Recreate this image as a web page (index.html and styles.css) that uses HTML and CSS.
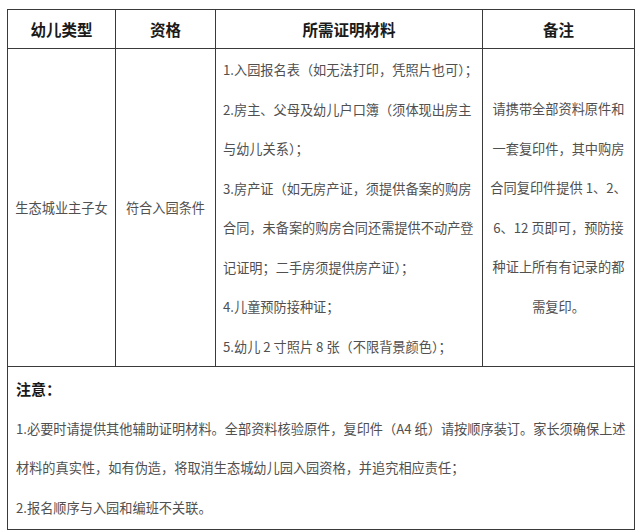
FILE: index.html
```html
<!DOCTYPE html>
<html lang="zh">
<head>
<meta charset="utf-8">
<link rel="stylesheet" href="styles.css">
</head>
<body>
<div class="sheet">
  <table class="grid">
    <colgroup>
      <col class="c1"><col class="c2"><col class="c3"><col class="c4">
    </colgroup>
    <thead>
      <tr>
        <th>幼儿类型</th>
        <th>资格</th>
        <th>所需证明材料</th>
        <th>备注</th>
      </tr>
    </thead>
    <tbody>
      <tr class="body-row">
        <td class="center">生态城业主子女</td>
        <td class="center">符合入园条件</td>
        <td class="materials">1.入园报名表（如无法打印，凭照片也可）；<br>2.房主、父母及幼儿户口簿（须体现出房主<br>与幼儿关系）；<br>3.房产证（如无房产证，须提供备案的购房<br>合同，未备案的购房合同还需提供不动产登<br>记证明；二手房须提供房产证）；<br>4.儿童预防接种证；<br>5.幼儿 2 寸照片 8 张（不限背景颜色）；</td>
        <td class="center remark">请携带全部资料原件和<br>一套复印件，其中购房<br>合同复印件提供 1、2、<br>6、12 页即可，预防接<br>种证上所有有记录的都<br>需复印。</td>
      </tr>
      <tr>
        <td colspan="4" class="notes">
          <div class="notes-title">注意：</div>
          <div>1.必要时请提供其他辅助证明材料。全部资料核验原件，复印件（A4 纸）请按顺序装订。家长须确保上述</div>
          <div>材料的真实性，如有伪造，将取消生态城幼儿园入园资格，并追究相应责任；</div>
          <div>2.报名顺序与入园和编班不关联。</div>
        </td>
      </tr>
    </tbody>
  </table>
</div>
</body>
</html>
```

FILE: styles.css
```css
html, body {
  margin: 0;
  padding: 0;
  background: #ffffff;
}
body {
  font-family: "Noto Sans CJK SC", "Noto Sans", sans-serif;
  color: #505050;
}
.sheet {
  padding: 9px 0 0 7px;
}
.grid {
  border-collapse: collapse;
  table-layout: fixed;
  width: 627px;
  font-size: 13.2px;
}
.c1 { width: 108px; }
.c2 { width: 100px; }
.c3 { width: 267px; }
.c4 { width: 152px; }
.grid th,
.grid td {
  border: 1px solid #3a3a3a;
  padding: 0;
}
.grid th {
  height: 38px;
  font-size: 15.5px;
  font-weight: bold;
  color: #1a1a1a;
  text-align: center;
  vertical-align: middle;
}
.body-row td {
  height: 316px;
  vertical-align: middle;
  line-height: 39.5px;
}
.center {
  text-align: center;
}
.materials {
  padding: 1px 0 0 7px !important;
  white-space: nowrap;
  vertical-align: top !important;
}
.remark {
  white-space: nowrap;
}
.notes {
  padding: 2px 0 2px 8px !important;
  line-height: 39.5px;
  white-space: nowrap;
}
.notes-title {
  font-size: 15px;
  font-weight: bold;
  color: #1a1a1a;
}
```
